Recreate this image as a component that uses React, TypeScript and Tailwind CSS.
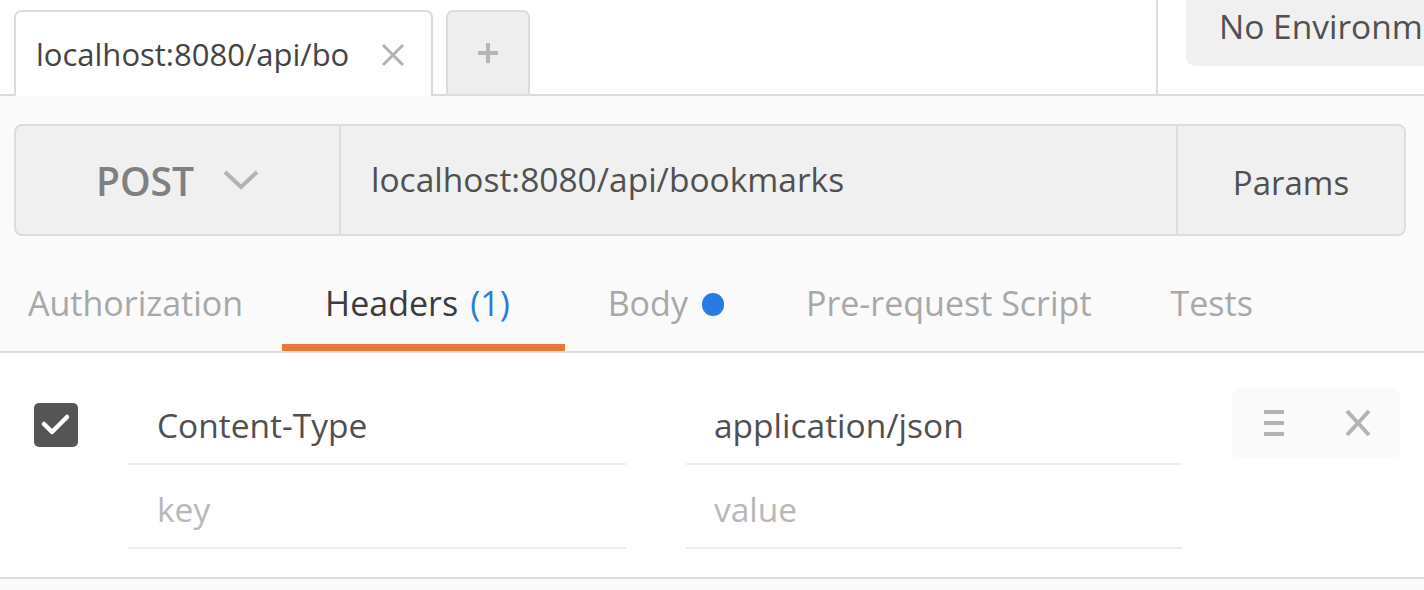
import React from 'react';

const tabs = [
  { label: 'Authorization', pad: 'pl-[28px] pr-[39px]' },
  { label: 'Headers', active: true, count: 1, pad: 'pl-[43px] pr-[55px]' },
  { label: 'Body', dot: true, pad: 'pl-[43px] pr-[41px]' },
  { label: 'Pre-request Script', pad: 'pl-[41px] pr-[38px]' },
  { label: 'Tests', pad: 'pl-[41px]' },
];

function RequestTabBar() {
  return (
    <div className="flex h-[96px] border-b-2 border-[#dddddd] bg-white">
      <div className="flex items-end gap-[13px] pl-[14px]">
        <div className="-mb-[2px] flex h-[86px] w-[419px] items-center justify-between rounded-t-[7px] border-2 border-b-0 border-[#dddddd] bg-white pl-[20px] pr-[26px]">
          <span className="text-[31px] leading-none text-[#444444]">localhost:8080/api/bo</span>
          <svg width="24" height="24" viewBox="0 0 24 24" className="mt-[2px]">
            <path d="M2 2 L22 22 M22 2 L2 22" stroke="#b3b3b3" strokeWidth="3" />
          </svg>
        </div>
        <div className="flex h-[84px] w-[84px] items-center justify-center rounded-t-[7px] border-2 border-b-0 border-[#dddddd] bg-[#eeeeee]">
          <svg width="22" height="22" viewBox="0 0 22 22">
            <path d="M11 1 V21 M1 11 H21" stroke="#b5b5b5" strokeWidth="4" />
          </svg>
        </div>
      </div>
      <div className="flex-1" />
      <div className="w-[2px] bg-[#dddddd]" />
      <div className="w-[28px]" />
      <div className="flex h-[66px] min-w-[238px] max-w-[238px] flex-1 items-center overflow-hidden rounded-bl-[9px] bg-[#f0f0f0] pb-[12px] pl-[33px]">
        <span className="whitespace-nowrap text-[33.5px] leading-none text-[#505050]">No Environment</span>
      </div>
    </div>
  );
}

function UrlBar() {
  return (
    <div className="mx-[14px] mr-[18px] mt-[28px] flex h-[112px] overflow-hidden rounded-[8px] border-2 border-[#dddddd] bg-[#f0f0f0]">
      <div className="flex w-[325px] items-center justify-center gap-[29px] border-r-2 border-[#dddddd]">
        <span className="text-[39px] font-semibold leading-none text-[#808080]">POST</span>
        <svg width="36" height="20" viewBox="0 0 36 20">
          <path d="M2 2 L18 17 L34 2" fill="none" stroke="#b3b3b3" strokeWidth="4" />
        </svg>
      </div>
      <div className="flex flex-1 items-center border-r-2 border-[#dddddd] pl-[30px]">
        <span className="text-[33.5px] leading-none text-[#505050]">localhost:8080/api/bookmarks</span>
      </div>
      <div className="flex w-[226px] items-center justify-center pt-[4px]">
        <span className="text-[33px] leading-none text-[#505050]">Params</span>
      </div>
    </div>
  );
}

function SectionTabs() {
  return (
    <div className="flex h-[117px] border-b-2 border-[#dddddd]">
      {tabs.map((t) => (
        <div
          key={t.label}
          className={
            'flex items-center border-b-[7px] pt-[26px] ' +
            t.pad +
            ' ' +
            (t.active ? 'border-[#e5793a]' : 'border-transparent')
          }
        >
          <span
            className={
              'whitespace-nowrap text-[34px] leading-none ' + (t.active ? 'text-[#3c3c3c]' : 'text-[#a8a8a8]')
            }
          >
            {t.label}
            {t.count !== undefined && <span className="ml-[12px] text-[#2a7ae2]">({t.count})</span>}
          </span>
          {t.dot && <span className="ml-[14px] mt-[2px] h-[23px] w-[22px] rounded-full bg-[#2a7ae2]" />}
        </div>
      ))}
    </div>
  );
}

function Checkbox() {
  return (
    <div className="flex h-[44px] w-[44px] items-center justify-center rounded-[5px] bg-[#555555]">
      <svg width="44" height="44" viewBox="0 0 44 44">
        <path d="M10 21 L18 29 L33 14" fill="none" stroke="white" strokeWidth="4.5" strokeLinecap="round" strokeLinejoin="round" />
      </svg>
    </div>
  );
}

function HeaderRow({ k, v, placeholder, actions }: { k: string; v: string; placeholder?: boolean; actions?: boolean }) {
  const textCls = 'text-[33.5px] leading-none ' + (placeholder ? 'text-[#b8b8b8]' : 'text-[#505050]');
  return (
    <div className="flex items-center">
      <div className="flex w-[128px] items-center pl-[34px] pt-[4px]">{actions && <Checkbox />}</div>
      <div className="flex h-[84px] w-[498px] items-center border-b-2 border-[#eeeeee] pl-[29px] pt-[7px]">
        <span className={textCls}>{k}</span>
      </div>
      <div className="w-[60px]" />
      <div className="flex h-[84px] w-[496px] items-center border-b-2 border-[#eeeeee] pl-[28px] pt-[7px]">
        <span className={textCls}>{v}</span>
      </div>
      <div className="w-[50px]" />
      {actions && (
        <div className="flex h-[70px] w-[168px] items-center rounded-[8px] bg-[#fafafa] pl-[32px]">
          <svg width="20" height="30" viewBox="0 0 20 30">
            <rect x="0" y="2" width="20" height="4" fill="#b3b3b3" />
            <rect x="0" y="13" width="20" height="4" fill="#b3b3b3" />
            <rect x="0" y="24" width="20" height="4" fill="#b3b3b3" />
          </svg>
          <svg width="26" height="28" viewBox="0 0 26 28" className="ml-[61px]">
            <path d="M2 2 L24 26 M24 2 L2 26" stroke="#b3b3b3" strokeWidth="4" />
          </svg>
        </div>
      )}
    </div>
  );
}

export default function App() {
  return (
    <div className="h-[590px] w-[1424px] overflow-hidden bg-[#fafafa] font-['Open_Sans',sans-serif]">
      <RequestTabBar />
      <UrlBar />
      <SectionTabs />
      <div className="border-b-2 border-[#dddddd] bg-white pb-[28px] pt-[28px]">
        <HeaderRow k="Content-Type" v="application/json" actions />
        <HeaderRow k="key" v="value" placeholder />
      </div>
    </div>
  );
}
